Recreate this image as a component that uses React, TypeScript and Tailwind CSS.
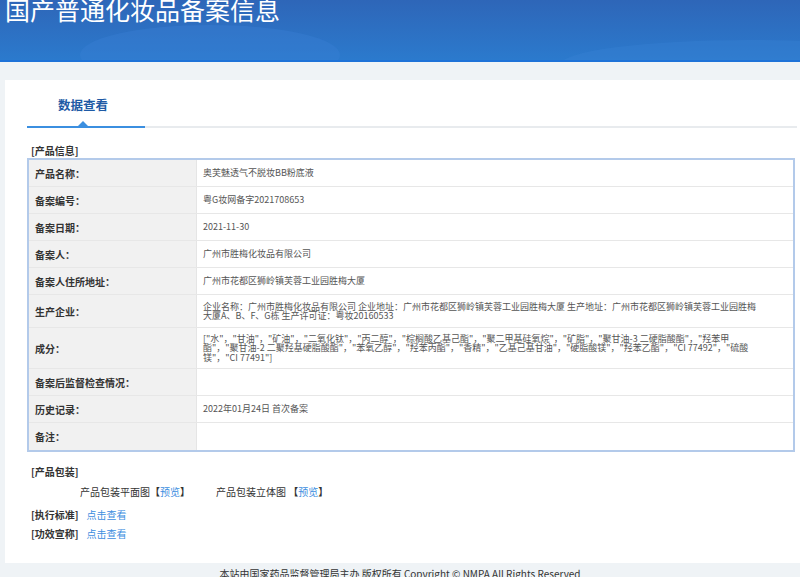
const rows: { label: string; value: React.ReactNode; h: string }[] = [
  { label: "产品名称：", value: "奥芙魅透气不脱妆BB粉底液", h: "h-[27px]" },
  { label: "备案编号：", value: "粤G妆网备字2021708653", h: "h-[27px]" },
  { label: "备案日期：", value: "2021-11-30", h: "h-[27px]" },
  { label: "备案人：", value: "广州市胜梅化妆品有限公司", h: "h-[27px]" },
  { label: "备案人住所地址：", value: "广州市花都区狮岭镇芙蓉工业园胜梅大厦", h: "h-[27px]" },
  {
    label: "生产企业：",
    value:
      "企业名称：广州市胜梅化妆品有限公司 企业地址：广州市花都区狮岭镇芙蓉工业园胜梅大厦 生产地址：广州市花都区狮岭镇芙蓉工业园胜梅大厦A、B、F、G栋 生产许可证：粤妆20160533",
    h: "h-[33px]",
  },
  {
    label: "成分：",
    value:
      '["水"，"甘油"，"矿油"，"二氧化钛"，"丙二醇"，"棕榈酸乙基己酯"，"聚二甲基硅氧烷"，"矿脂"，"聚甘油-3 二硬脂酸酯"，"羟苯甲酯"，"聚甘油-2 二聚羟基硬脂酸酯"，"苯氧乙醇"，"羟苯丙酯"，"香精"，"乙基己基甘油"，"硬脂酸镁"，"羟苯乙酯"，"CI 77492"，"硫酸镁"，"CI 77491"]',
    h: "h-[41px]",
  },
  { label: "备案后监督检查情况：", value: "", h: "h-[27px]" },
  { label: "历史记录：", value: "2022年01月24日 首次备案", h: "h-[27px]" },
  { label: "备注：", value: "", h: "h-[27px]" },
]

export default function App() {
  return (
    <div
      className="w-[800px] h-[577px] overflow-hidden bg-[#eff3f6] text-[#333]"
      style={{ fontFamily: '"Noto Sans CJK SC", "Liberation Sans", sans-serif' }}
    >
      {/* header */}
      <div className="relative h-[62px] bg-gradient-to-b from-[#2e66b8] to-[#2b7acd] border-b-2 border-[#1e72d8] overflow-hidden px-[5px]">
        <div className="absolute left-[80px] top-[25px] w-[260px] h-[60px] rounded-[50%] bg-[#3a80d4]/40" />
        <div className="absolute left-[560px] top-[40px] w-[380px] h-[50px] rounded-[50%] bg-[#3a85d6]/30" />
        <h1 className="relative -mt-[6px] text-[25px] leading-[30px] text-white font-normal">
          国产普通化妆品备案信息
        </h1>
      </div>

      {/* card */}
      <div className="mt-[18px] ml-[5px] bg-white h-[483px] pl-[22px] pr-[3px]">
        <div className="relative h-[48px] border-b-2 border-[#e8ebee] flex items-end">
          <div className="relative -mb-[2px] w-[118px] h-[48px] border-b-2 border-[#3b8fe0] flex items-center justify-center">
            <span className="text-[12.5px] font-bold text-[#1e5aa5] mt-[4px] -ml-[6px]">数据查看</span>
            <span className="absolute bottom-0 left-[51px] w-0 h-0 border-l-[5px] border-r-[5px] border-b-[5px] border-l-transparent border-r-transparent border-b-[#3b8fe0]" />
          </div>
        </div>

        <div className="pt-[17px] pl-[4px] text-[10px] font-bold leading-[12px]">[产品信息]</div>

        <div className="mt-[1px] border-2 border-[#b3caea] w-[768px]">
          {rows.map((r, i) => (
            <div
              key={r.label}
              className={`flex ${r.h} ${i < rows.length - 1 ? "border-b border-[#e7e7e7]" : ""}`}
            >
              <div className="w-[168px] shrink-0 bg-[#f1f1f1] border-r border-[#e5e5e5] flex items-center pl-[6px] text-[10px] font-bold text-[#333]">
                {r.label}
              </div>
              <div className="flex-1 flex items-center pl-[6px] pr-[30px] text-[9px] leading-[9.5px] text-[#555]">
                <span>{r.value}</span>
              </div>
            </div>
          ))}
        </div>

        <div className="pt-[13px] pl-[4px] text-[10px] leading-[14px]">
          <div className="font-bold">[产品包装]</div>
          <div className="mt-[6px] flex text-[#333]">
            <span className="ml-[49px]">
              产品包装平面图<span className="font-bold">【</span>
              <span className="text-[#3d8ee0]">预览</span>
              <span className="font-bold">】</span>
            </span>
            <span className="ml-[26px]">
              产品包装立体图 <span className="font-bold">【</span>
              <span className="text-[#3d8ee0]">预览</span>
              <span className="font-bold">】</span>
            </span>
          </div>
          <div className="mt-[9px] flex gap-[8px]">
            <span className="font-bold">[执行标准]</span>
            <span className="text-[#3d8ee0]">点击查看</span>
          </div>
          <div className="mt-[5px] flex gap-[8px]">
            <span className="font-bold">[功效宣称]</span>
            <span className="text-[#3d8ee0]">点击查看</span>
          </div>
        </div>
      </div>

      {/* footer */}
      <div className="pt-[4px] text-center text-[10px] leading-[14px] text-[#333]">
        本站由国家药品监督管理局主办 版权所有 Copyright © NMPA All Rights Reserved
      </div>
    </div>
  )
}
